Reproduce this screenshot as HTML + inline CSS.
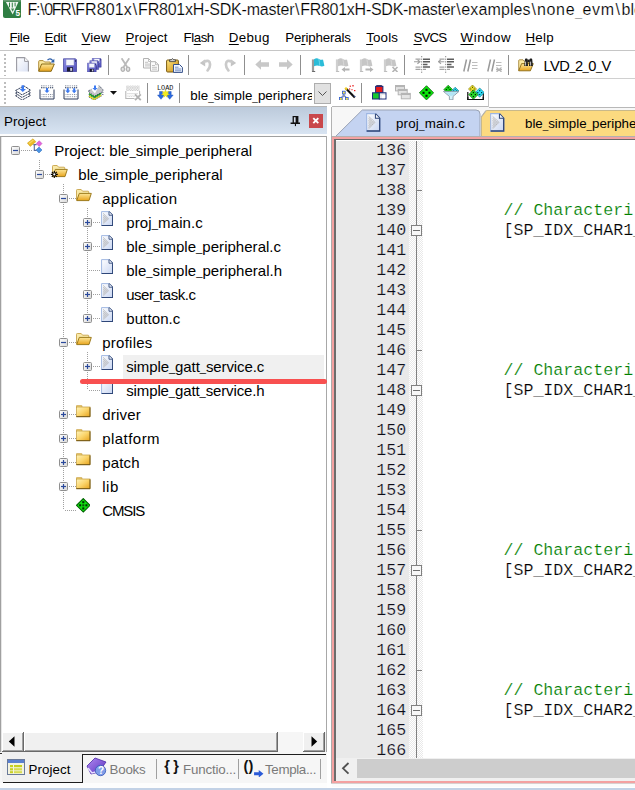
<!DOCTYPE html>
<html><head><meta charset="utf-8"><title>uVision</title><style>
html,body{margin:0;padding:0;background:#fff}
#r{position:relative;width:635px;height:790px;overflow:hidden;background:#fff;font-family:"Liberation Sans",sans-serif}
#r div,#r span.t,#r svg{position:absolute}
#r span.t{white-space:pre}
#r u{text-decoration:underline;text-underline-offset:1.5px;text-decoration-thickness:1px}
</style></head><body><div id="r">
<svg width="0" height="0" style="left:0;top:0"><defs><linearGradient id="gPage" x1="0" y1="0" x2="1" y2="1"><stop offset="0" stop-color="#ffffff"/><stop offset="1" stop-color="#c9d6f2"/></linearGradient><linearGradient id="gFold" x1="0" y1="0" x2="0" y2="1"><stop offset="0" stop-color="#fde79a"/><stop offset="1" stop-color="#e8a41c"/></linearGradient><linearGradient id="gFold2" x1="0" y1="0" x2="0" y2="1"><stop offset="0" stop-color="#fde88f"/><stop offset="1" stop-color="#d99a18"/></linearGradient><linearGradient id="gFlop" x1="0" y1="0" x2="1" y2="1"><stop offset="0" stop-color="#8c8ce6"/><stop offset="1" stop-color="#5050ba"/></linearGradient><linearGradient id="gExp" x1="0" y1="0" x2="1" y2="1"><stop offset="0" stop-color="#ffffff"/><stop offset="1" stop-color="#d8d8d8"/></linearGradient><linearGradient id="gClip" x1="0" y1="0" x2="1" y2="1"><stop offset="0" stop-color="#ffe680"/><stop offset="1" stop-color="#c98a10"/></linearGradient><linearGradient id="gBook" x1="0" y1="0" x2="1" y2="1"><stop offset="0" stop-color="#b08af0"/><stop offset="1" stop-color="#5a30c0"/></linearGradient><linearGradient id="gFoldC" x1="0" y1="0" x2="1" y2="1"><stop offset="0" stop-color="#fff4bc"/><stop offset=".5" stop-color="#fbd56c"/><stop offset="1" stop-color="#e6a21c"/></linearGradient><pattern id="pDots" width="2" height="2" patternUnits="userSpaceOnUse"><rect width="1" height="1" fill="#adadad"/><rect x="1" y="1" width="1" height="1" fill="#adadad"/></pattern><linearGradient id="gNew" x1="0" y1="0" x2="1" y2="1"><stop offset="0" stop-color="#ffffff"/><stop offset="1" stop-color="#dbe2f4"/></linearGradient><pattern id="pDotsG" width="2.4" height="2.4" patternUnits="userSpaceOnUse"><rect width="1.2" height="1.2" fill="#bcbcbc"/><rect x="1.2" y="1.2" width="1.2" height="1.2" fill="#c8c8c8"/></pattern><pattern id="pDotsN" width="2.2" height="2.2" patternUnits="userSpaceOnUse"><rect width="1.1" height="1.1" fill="#34425f"/></pattern></defs></svg>
<svg style="left:2.8px;top:0px" width="18.4" height="18" viewBox="0 0 18.4 18"><rect x="0" y="-1" width="18.2" height="19" rx="2" fill="#2f7e43"/><rect x="0.4" y="0" width="17.4" height="1.6" fill="#7fa888" opacity=".7"/><path d="M2.9 1.9 H15.4 L9.7 14.6 Z" fill="#fff" opacity=".93"/><path d="M6.5 2.6 V7.3 M9.3 2.6 V7.6 M12.1 2.6 V6.4" stroke="#2f7e43" stroke-width="1"/><path d="M8 8.4 L11.2 8.4 L9.7 11.8 Z" fill="#2f7e43" opacity=".9"/><text x="12.6" y="16.3" font-family="Liberation Sans,sans-serif" font-weight="bold" font-size="8.2" fill="#fff">5</text></svg>
<span class="t" style="left:27.50px;top:-0.14px;font-size:16px;line-height:20px;color:#000;font-family:'Liberation Sans',sans-serif;letter-spacing:-1.224px;-webkit-text-stroke:0.18px #fff;">F:<span style="margin:0 0.85px">\</span></span>
<span class="t" style="left:44.20px;top:-0.14px;font-size:16px;line-height:20px;color:#000;font-family:'Liberation Sans',sans-serif;letter-spacing:-1.343px;-webkit-text-stroke:0.18px #fff;">0FR<span style="margin:0 0.85px">\</span></span>
<span class="t" style="left:75.20px;top:-0.14px;font-size:16px;line-height:20px;color:#000;font-family:'Liberation Sans',sans-serif;letter-spacing:0.104px;-webkit-text-stroke:0.18px #fff;">FR801x<span style="margin:0 0.85px">\</span></span>
<span class="t" style="left:138.10px;top:-0.14px;font-size:16px;line-height:20px;color:#000;font-family:'Liberation Sans',sans-serif;letter-spacing:-0.215px;-webkit-text-stroke:0.18px #fff;">FR801xH-SDK-master<span style="margin:0 0.85px">\</span></span>
<span class="t" style="left:300.20px;top:-0.14px;font-size:16px;line-height:20px;color:#000;font-family:'Liberation Sans',sans-serif;letter-spacing:-0.268px;-webkit-text-stroke:0.18px #fff;">FR801xH-SDK-master<span style="margin:0 0.85px">\</span></span>
<span class="t" style="left:461.30px;top:-0.14px;font-size:16px;line-height:20px;color:#000;font-family:'Liberation Sans',sans-serif;letter-spacing:0.120px;-webkit-text-stroke:0.18px #fff;">examples<span style="margin:0 0.85px">\</span></span>
<span class="t" style="left:537.00px;top:-0.14px;font-size:16px;line-height:20px;color:#000;font-family:'Liberation Sans',sans-serif;letter-spacing:0.654px;-webkit-text-stroke:0.18px #fff;">none<span style="font-size:11.94px;position:relative;top:0.8px">_</span>evm<span style="margin:0 0.85px">\</span></span>
<span class="t" style="left:621.50px;top:-0.14px;font-size:16px;line-height:20px;color:#000;font-family:'Liberation Sans',sans-serif;-webkit-text-stroke:0.18px #fff;">ble<span style="font-size:11.94px;position:relative;top:0.8px">_</span>simple</span>
<span class="t" style="left:9.50px;top:28.68px;font-size:13.33px;line-height:17px;color:#000;font-family:'Liberation Sans',sans-serif;letter-spacing:-0.371px;"><u>F</u>ile</span>
<span class="t" style="left:44.50px;top:28.68px;font-size:13.33px;line-height:17px;color:#000;font-family:'Liberation Sans',sans-serif;letter-spacing:-0.242px;"><u>E</u>dit</span>
<span class="t" style="left:81.50px;top:28.68px;font-size:13.33px;line-height:17px;color:#000;font-family:'Liberation Sans',sans-serif;letter-spacing:0.086px;"><u>V</u>iew</span>
<span class="t" style="left:125.50px;top:28.68px;font-size:13.33px;line-height:17px;color:#000;font-family:'Liberation Sans',sans-serif;letter-spacing:0.074px;"><u>P</u>roject</span>
<span class="t" style="left:183.50px;top:28.68px;font-size:13.33px;line-height:17px;color:#000;font-family:'Liberation Sans',sans-serif;letter-spacing:-0.459px;">Fl<u>a</u>sh</span>
<span class="t" style="left:228.80px;top:28.68px;font-size:13.33px;line-height:17px;color:#000;font-family:'Liberation Sans',sans-serif;letter-spacing:0.344px;"><u>D</u>ebug</span>
<span class="t" style="left:285.20px;top:28.68px;font-size:13.33px;line-height:17px;color:#000;font-family:'Liberation Sans',sans-serif;letter-spacing:-0.166px;">Pe<u>r</u>ipherals</span>
<span class="t" style="left:366.20px;top:28.68px;font-size:13.33px;line-height:17px;color:#000;font-family:'Liberation Sans',sans-serif;letter-spacing:0.175px;"><u>T</u>ools</span>
<span class="t" style="left:413.50px;top:28.68px;font-size:13.33px;line-height:17px;color:#000;font-family:'Liberation Sans',sans-serif;letter-spacing:-0.899px;"><u>S</u>VCS</span>
<span class="t" style="left:460.50px;top:28.68px;font-size:13.33px;line-height:17px;color:#000;font-family:'Liberation Sans',sans-serif;letter-spacing:0.549px;"><u>W</u>indow</span>
<span class="t" style="left:525.50px;top:28.68px;font-size:13.33px;line-height:17px;color:#000;font-family:'Liberation Sans',sans-serif;letter-spacing:0.220px;"><u>H</u>elp</span>
<div style="left:0px;top:50px;width:635px;height:1px;background:#c6c6c6;"></div>
<div style="left:0px;top:78px;width:635px;height:1px;background:#d0d0d0;"></div>
<div style="left:0px;top:105.8px;width:488.5px;height:1.3px;background:#b6b6b6;"></div>
<div style="left:488.5px;top:107px;width:147px;height:1.3px;background:#b8b8b8;"></div>
<div style="left:4.2px;top:54px;width:1.6px;height:22.5px;background:repeating-linear-gradient(to bottom,#bdbdbd 0,#bdbdbd 1.6px,transparent 1.6px,transparent 4.1px);"></div>
<div style="left:4.2px;top:82.3px;width:1.6px;height:22.5px;background:repeating-linear-gradient(to bottom,#bdbdbd 0,#bdbdbd 1.6px,transparent 1.6px,transparent 4.1px);"></div>
<div style="left:108px;top:55px;width:1px;height:20px;background:#8f8f8f;"></div>
<div style="left:188px;top:55px;width:1px;height:20px;background:#8f8f8f;"></div>
<div style="left:244px;top:55px;width:1px;height:20px;background:#8f8f8f;"></div>
<div style="left:300px;top:55px;width:1px;height:20px;background:#8f8f8f;"></div>
<div style="left:404px;top:55px;width:1px;height:20px;background:#8f8f8f;"></div>
<div style="left:508px;top:55px;width:1px;height:20px;background:#8f8f8f;"></div>
<div style="left:147px;top:83px;width:1px;height:20px;background:#8f8f8f;"></div>
<div style="left:179px;top:83px;width:1px;height:20px;background:#8f8f8f;"></div>
<div style="left:361px;top:83px;width:1px;height:20px;background:#8f8f8f;"></div>
<div style="left:488px;top:79px;width:1px;height:28px;background:#c6c6c6;"></div>
<svg style="left:16px;top:57px" width="13" height="15" viewBox="0 0 13 15"><path d="M0.6 14.6 V0.6 H8.6 L12.4 4.4 V14.6" fill="url(#gNew)" stroke="#9a9aa2" stroke-width="1.1"/><path d="M8.6 0.6 V4.4 H12.4" fill="#fff" stroke="#9a9aa2" stroke-width="1"/></svg>
<svg style="left:38px;top:57px" width="17" height="15" viewBox="0 0 17 15"><path d="M0.7 14 V4.5 Q0.7 3.6 1.6 3.6 H5.2 L6.6 5 H12.2 V7" fill="#fbe9a0" stroke="#b08d3a" stroke-width="1"/><path d="M0.7 14.3 L3.6 7 H16.3 L13.2 14.3 Z" fill="url(#gFold)" stroke="#8a6a14" stroke-width="1"/><path d="M9.5 3.2 Q12 0.2 14.8 3.6" fill="none" stroke="#2c5ea8" stroke-width="1.3"/><path d="M16.3 1.8 V5.6 H12.5 Z" fill="#2c5ea8"/></svg>
<svg style="left:63px;top:57.5px" width="14" height="14.5" viewBox="0 0 14 14"><g transform="translate(0,0) scale(1.0)"><path d="M0.5 0.5 H12.5 L13.5 1.5 V13.5 H0.5 Z" fill="url(#gFlop)" stroke="#3c3c98" stroke-width=".7"/><rect x="3" y="1.2" width="8" height="5.8" fill="#f4f6fc" stroke="#8c8cc8" stroke-width=".5"/><rect x="4" y="9" width="6" height="4.3" fill="#1a1a30"/><rect x="7.2" y="9.8" width="2" height="2.8" fill="#d0d0e0"/><rect x="12" y="2" width="1" height="1.4" fill="#1a1a50"/></g></svg>
<svg style="left:87px;top:57.5px" width="15" height="14.5" viewBox="0 0 15 14.5"><g transform="translate(5,0) scale(0.68)"><path d="M0.5 0.5 H12.5 L13.5 1.5 V13.5 H0.5 Z" fill="url(#gFlop)" stroke="#3c3c98" stroke-width=".7"/><rect x="3" y="1.2" width="8" height="5.8" fill="#f4f6fc" stroke="#8c8cc8" stroke-width=".5"/><rect x="4" y="9" width="6" height="4.3" fill="#1a1a30"/><rect x="7.2" y="9.8" width="2" height="2.8" fill="#d0d0e0"/><rect x="12" y="2" width="1" height="1.4" fill="#1a1a50"/></g><g transform="translate(2.5,2.3) scale(0.68)"><path d="M0.5 0.5 H12.5 L13.5 1.5 V13.5 H0.5 Z" fill="url(#gFlop)" stroke="#3c3c98" stroke-width=".7"/><rect x="3" y="1.2" width="8" height="5.8" fill="#f4f6fc" stroke="#8c8cc8" stroke-width=".5"/><rect x="4" y="9" width="6" height="4.3" fill="#1a1a30"/><rect x="7.2" y="9.8" width="2" height="2.8" fill="#d0d0e0"/><rect x="12" y="2" width="1" height="1.4" fill="#1a1a50"/></g><g transform="translate(0,4.8) scale(0.68)"><path d="M0.5 0.5 H12.5 L13.5 1.5 V13.5 H0.5 Z" fill="url(#gFlop)" stroke="#3c3c98" stroke-width=".7"/><rect x="3" y="1.2" width="8" height="5.8" fill="#f4f6fc" stroke="#8c8cc8" stroke-width=".5"/><rect x="4" y="9" width="6" height="4.3" fill="#1a1a30"/><rect x="7.2" y="9.8" width="2" height="2.8" fill="#d0d0e0"/><rect x="12" y="2" width="1" height="1.4" fill="#1a1a50"/></g></svg>
<svg style="left:120px;top:58px" width="11" height="14" viewBox="0 0 11 14"><path d="M1.6 0.3 L7.2 9 M9.2 0.3 L3.6 9" stroke="#bababa" stroke-width="1.8" fill="none"/><ellipse cx="2.8" cy="11.2" rx="1.7" ry="2.1" fill="#e4e4e4" stroke="#b4b4b4" stroke-width="1.3"/><ellipse cx="8" cy="11.2" rx="1.7" ry="2.1" fill="#e4e4e4" stroke="#b4b4b4" stroke-width="1.3"/></svg>
<svg style="left:142.5px;top:58px" width="16" height="14" viewBox="0 0 16 14"><path d="M0.5 0.5 H5.5 L8.5 3.5 V10 H0.5 Z" fill="#fbfbfb" stroke="#b2b2b2" stroke-width="1"/><path d="M5.5 0.5 V3.5 H8.5" fill="none" stroke="#b2b2b2" stroke-width=".8"/><path d="M2 4.3 H5 M2 6.1 H7 M2 7.9 H7" stroke="#b4b4b4" stroke-width=".8"/><g transform="translate(7,3.2)"><path d="M0.5 0.5 H5.5 L8.5 3.5 V10 H0.5 Z" fill="#fbfbfb" stroke="#b2b2b2" stroke-width="1"/><path d="M5.5 0.5 V3.5 H8.5" fill="none" stroke="#b2b2b2" stroke-width=".8"/><path d="M2 4.3 H5 M2 6.1 H7 M2 7.9 H7" stroke="#b4b4b4" stroke-width=".8"/></g></svg>
<svg style="left:166px;top:57.5px" width="17" height="15" viewBox="0 0 17 15"><rect x="0.6" y="2" width="11.8" height="12" rx="1" fill="url(#gClip)" stroke="#7a5a10" stroke-width="1"/><path d="M3.5 3.6 V1.8 H5.2 Q6.5 -0.6 7.8 1.8 H9.5 V3.6 Z" fill="#cfcfcf" stroke="#3a3a3a" stroke-width=".8"/><path d="M7.5 6.5 H13.5 L16.4 9.4 V14.4 H7.5 Z" fill="#f2f6fe" stroke="#34508a" stroke-width="1"/><path d="M9 9.2 H12.5 M9 11 H15 M9 12.8 H15" stroke="#6a86c0" stroke-width=".9"/></svg>
<svg style="left:199px;top:58px" width="13" height="13.5" viewBox="0 0 13 13.5"><path d="M0.8 5 L6.2 1.2 V8.4 Z" fill="#c4c4c4"/><path d="M5.5 3.6 Q10.6 1.2 11 6 Q11.3 10 8.6 12.4" fill="none" stroke="#cacaca" stroke-width="2.7" stroke-linecap="round"/></svg>
<svg style="left:224px;top:58px" width="13" height="13.5" viewBox="0 0 13 13.5"><g transform="translate(13,0) scale(-1,1)"><path d="M0.8 5 L6.2 1.2 V8.4 Z" fill="#c4c4c4"/><path d="M5.5 3.6 Q10.6 1.2 11 6 Q11.3 10 8.6 12.4" fill="none" stroke="#cacaca" stroke-width="2.7" stroke-linecap="round"/></g></svg>
<svg style="left:255px;top:59.3px" width="14" height="11" viewBox="0 0 14 11"><path d="M0.3 5.5 L6 0.3 V3.3 H14 V7.7 H6 V10.7 Z" fill="#c8c8c8"/></svg>
<svg style="left:279px;top:59.3px" width="14" height="11" viewBox="0 0 14 11"><g transform="translate(14,0) scale(-1,1)"><path d="M0.3 5.5 L6 0.3 V3.3 H14 V7.7 H6 V10.7 Z" fill="#c8c8c8"/></g></svg>
<svg style="left:310.5px;top:57.5px" width="14" height="14.5" viewBox="0 0 14 14.5"><rect x="0.9" y="1.4" width="2.2" height="13" fill="#9c9c9c"/><rect x="1.2" y="13" width="3" height="1.4" fill="#6a6a6a"/><path d="M3 1.2 Q5.5 -0.6 8 0.9 Q10 2.2 12 1.5 L13.4 7.8 Q11 9 9 8.1 Q6 6.6 3 8.3 Z" fill="#2bbcd8"/><path d="M7.8 1 Q8.6 4 8.8 8" stroke="#7adcf0" stroke-width=".8" fill="none"/></svg>
<svg style="left:335px;top:57.5px" width="15" height="14.5" viewBox="0 0 15 14.5"><rect x="0.9" y="1.4" width="2.2" height="13" fill="#cfcfcf"/><rect x="1.2" y="13" width="3" height="1.4" fill="#bdbdbd"/><path d="M3 1.2 Q5.5 -0.6 8 0.9 Q10 2.2 12 1.5 L13.4 7.8 Q11 9 9 8.1 Q6 6.6 3 8.3 Z" fill="#c6c6c6"/><path d="M7.8 1 Q8.6 4 8.8 8" stroke="#dcdcdc" stroke-width=".8" fill="none"/><path d="M14.5 10.6 H10 V9 L6.5 11.6 L10 14.2 V12.6 H14.5 Z" fill="#b4b4b4"/></svg>
<svg style="left:359px;top:57.5px" width="15" height="14.5" viewBox="0 0 15 14.5"><rect x="0.9" y="1.4" width="2.2" height="13" fill="#cfcfcf"/><rect x="1.2" y="13" width="3" height="1.4" fill="#bdbdbd"/><path d="M3 1.2 Q5.5 -0.6 8 0.9 Q10 2.2 12 1.5 L13.4 7.8 Q11 9 9 8.1 Q6 6.6 3 8.3 Z" fill="#c6c6c6"/><path d="M7.8 1 Q8.6 4 8.8 8" stroke="#dcdcdc" stroke-width=".8" fill="none"/><path d="M6.5 10.6 H11 V9 L14.5 11.6 L11 14.2 V12.6 H6.5 Z" fill="#b4b4b4"/></svg>
<svg style="left:383px;top:57.5px" width="16" height="14.5" viewBox="0 0 16 14.5"><rect x="0.9" y="1.4" width="2.2" height="13" fill="#cfcfcf"/><rect x="1.2" y="13" width="3" height="1.4" fill="#bdbdbd"/><path d="M3 1.2 Q5.5 -0.6 8 0.9 Q10 2.2 12 1.5 L13.4 7.8 Q11 9 9 8.1 Q6 6.6 3 8.3 Z" fill="#c6c6c6"/><path d="M7.8 1 Q8.6 4 8.8 8" stroke="#dcdcdc" stroke-width=".8" fill="none"/><path d="M9.5 9 L14.5 14 M14.5 9 L9.5 14" stroke="#b4b4b4" stroke-width="1.6" fill="none"/></svg>
<svg style="left:414px;top:56.4px" width="16.2" height="17" viewBox="0 -2 16.2 17"><path d="M9 1.2 H16 M9 3.7 H16 M9 6.4 H13.5 M9 9.1 H16" stroke="#5e5e5e" stroke-width="1.5"/><path d="M1.5 1.2 H6.5 M1.5 9.1 H6.5 M1.5 11.4 H6.5 M9 11.4 H12" stroke="#a4a4a4" stroke-width="1.2"/><path d="M7.7 -2 V15" stroke="#8a8a8a" stroke-width="1" stroke-dasharray="1.3 1.3"/><path d="M0 3.7 H5.6 M3.4 1.6 L6 3.7 L3.4 5.8" stroke="#a0a0a0" stroke-width="1.1" fill="none"/></svg>
<svg style="left:438px;top:56.4px" width="16.2" height="17" viewBox="0 -2 16.2 17"><path d="M9 1.2 H16 M9 3.7 H16 M9 6.4 H13.5 M9 9.1 H16" stroke="#5e5e5e" stroke-width="1.5"/><path d="M1.5 1.2 H6.5 M1.5 9.1 H6.5 M1.5 11.4 H6.5 M9 11.4 H12" stroke="#a4a4a4" stroke-width="1.2"/><path d="M7.7 -2 V15" stroke="#8a8a8a" stroke-width="1" stroke-dasharray="1.3 1.3"/><path d="M6.4 3.7 H0.8 M3 1.6 L0.4 3.7 L3 5.8" stroke="#a0a0a0" stroke-width="1.1" fill="none"/></svg>
<svg style="left:463px;top:58.5px" width="15" height="13" viewBox="0 0 15 13"><path d="M3.5 0.5 L0.8 12.5 M7.5 0.5 L4.8 12.5" stroke="#9a9a9a" stroke-width="1.5"/><path d="M9 3.5 H14.5 M9 6.5 H14.5 M9 9.5 H14.5" stroke="#bdbdbd" stroke-width="1.1"/></svg>
<svg style="left:487px;top:58.5px" width="15.5" height="13.5" viewBox="0 0 15.5 13.5"><path d="M3.5 0.5 L0.8 12.5 M7.5 0.5 L4.8 12.5" stroke="#9a9a9a" stroke-width="1.5"/><path d="M9 3.5 H14.5 M9 6.5 H14.5" stroke="#bdbdbd" stroke-width="1.1"/><path d="M9.5 8.5 L14.5 13 M14.5 8.5 L9.5 13 M9 10.7 H15" stroke="#b4b4b4" stroke-width="1.2"/></svg>
<svg style="left:518px;top:57.5px" width="16" height="14" viewBox="0 0 16 14"><path d="M0.7 12.6 V2.6 Q0.7 1.8 1.5 1.8 H5 L6.2 3.2 H11 V6" fill="#fbe9a0" stroke="#a88a40" stroke-width=".9"/><path d="M0.7 12.8 L3.6 5.6 H15.3 L12.4 12.8 Z" fill="url(#gFold)" stroke="#8a6a14" stroke-width=".9"/><path d="M7 1.2 Q7 0.4 7.8 0.4 H8.8 Q9.5 0.4 9.6 1.2 L10 8 H6.2 Z M11.6 1.2 Q11.6 0.4 12.4 0.4 H13.4 Q14.1 0.4 14.2 1.2 L14.9 8 H11 Z" fill="#1c1c1c"/><rect x="9.4" y="1.6" width="2.4" height="2.6" fill="#1c1c1c"/><path d="M7.6 3.6 V7.6 M12.6 3.6 V7.6" stroke="#c8c8c8" stroke-width="1"/></svg>
<svg style="left:14.5px;top:84.5px" width="16" height="15.5" viewBox="0 0 16 15.5"><path d="M0.6 10.7 L9 6.1 L15.6 10.399999999999999 L7 15.1 Z" fill="#fff" stroke="#26324e" stroke-width=".9" stroke-dasharray="2.4 .6"/><path d="M0.6 8.1 L9 3.5 L15.6 7.8 L7 12.5 Z" fill="#fff" stroke="#26324e" stroke-width=".9" stroke-dasharray="2.4 .6"/><path d="M0.6 5.5 L9 0.9000000000000004 L15.6 5.2 L7 9.9 Z" fill="#fff" stroke="#26324e" stroke-width=".9" stroke-dasharray="2.4 .6"/><path d="M6.6 0.3 h2.4 v3.6 h2 l-3.2 3.1 l-3.2 -3.1 h2 z" fill="#3c7af0"/></svg>
<svg style="left:38.5px;top:84.5px" width="16" height="15" viewBox="0 0 16 15"><path d="M1 4.5 V14 H15 V4.5" fill="none" stroke="#2a3858" stroke-width="1"/><rect x="2.6" y="9.2" width="11" height="1.1" fill="url(#pDotsN)"/><rect x="2.6" y="11.4" width="11" height="1.1" fill="url(#pDotsN)"/><rect x="2" y="0.5" width="12.5" height="3.3" fill="url(#pDotsN)"/><path d="M7 3 h2 v2.4 h1.6 l-2.6 2.6 l-2.6 -2.6 h1.6 z" fill="#3c7af0"/></svg>
<svg style="left:62.8px;top:84.5px" width="16" height="15" viewBox="0 0 16 15"><path d="M1 4.5 V14 H15 V4.5" fill="none" stroke="#2a3858" stroke-width="1"/><rect x="2.6" y="9.2" width="11" height="1.1" fill="url(#pDotsN)"/><rect x="2.6" y="11.4" width="11" height="1.1" fill="url(#pDotsN)"/><rect x="2" y="0.5" width="12.5" height="3.3" fill="url(#pDotsN)"/><path d="M3.8 3.2 h2 v2.4 h1.6 l-2.6 2.6 l-2.6 -2.6 h1.6 z" fill="#3c7af0"/><path d="M10.2 3.2 h2 v2.4 h1.6 l-2.6 2.6 l-2.6 -2.6 h1.6 z" fill="#3c7af0"/></svg>
<svg style="left:87.5px;top:84.5px" width="16.5" height="15.8" viewBox="0 0 16.5 15.8"><path d="M1 10.9 L6 14.3 L13.2 10.1" fill="none" stroke="#eef010" stroke-width="1.5"/><path d="M1 8.7 L6.4 12.2 L13.2 8" fill="none" stroke="#12a612" stroke-width="1.5"/><path d="M0.8 11.9 L5.9 15.3 L13.6 10.9 M0.8 9.8 L6.2 13.3 L13.4 9.1 M14.2 7.2 L15.4 7.4 M14.2 9.4 L15.4 9.6" fill="none" stroke="#26324e" stroke-width=".8" stroke-dasharray="1.3 1"/><path d="M0.7 5.7 L3.4 4.4 L7 8.4 L11 0.6 L15.3 5 L13.6 7.4 L6.6 11 L1 7.4 Z" fill="#c6c7ca"/><path d="M0.7 5.7 L3.4 4.4 M11 0.6 L15.3 5 L13.6 7.4 L6.6 11 L1 7.4 L0.7 5.7" fill="none" stroke="#26324e" stroke-width=".8" stroke-dasharray="1.3 .9"/><path d="M6 0.5 h2 v2.4 h1.6 l-2.6 2.6 l-2.6 -2.6 h1.6 z" fill="#3c7af0"/></svg>
<svg style="left:109.5px;top:91.4px" width="7" height="4" viewBox="0 0 7 4"><path d="M0 0 H7 L3.5 3.8 Z" fill="#111"/></svg>
<svg style="left:125px;top:84.5px" width="16.5" height="16" viewBox="0 0 16.5 16"><rect x="1" y="0.6" width="13.6" height="5.4" fill="url(#pDotsG)"/><path d="M0.8 5.9 V13.5 H9.5" fill="none" stroke="#b8b8b8" stroke-width="1.1"/><path d="M14.6 5.9 V9" stroke="#b8b8b8" stroke-width="1.1"/><rect x="2" y="8" width="11" height="1.2" fill="url(#pDotsG)"/><rect x="2" y="10.6" width="8" height="1.2" fill="url(#pDotsG)"/><path d="M10 9.4 L15.8 15.2 M15.8 9.4 L10 15.2" stroke="#b2b2b2" stroke-width="1.9"/></svg>
<svg style="left:157px;top:85px" width="17" height="15" viewBox="0 0 17 15"><text x="0" y="5" font-family="Liberation Mono,monospace" font-size="7" textLength="16.4" lengthAdjust="spacingAndGlyphs" fill="#111">LOAD</text><path d="M2.5 6.5 h3 v3.5 h2 l-3.5 4.3 l-3.5 -4.3 h2 z M11.2 6.5 h3 v3.5 h2 l-3.5 4.3 l-3.5 -4.3 h2 z" fill="#2a6ae0" stroke="#1a4ab0" stroke-width=".4"/><path d="M8.5 4.8 L9.5 7 L11.8 6.2 L10.6 8.3 L12.6 9.6 L10.2 10 L10.2 12.4 L8.5 10.7 L6.8 12.4 L6.8 10 L4.4 9.6 L6.4 8.3 L5.2 6.2 L7.5 7 Z" fill="#f4ec20" stroke="#c8b800" stroke-width=".3"/></svg>
<svg style="left:338.5px;top:84.5px" width="17" height="15.5" viewBox="0 0 17 15.5"><path d="M4.8 8.5 V11.5 M1.8 12.6 L4.8 10.4 L7.8 12.6" stroke="#3a6ae0" stroke-width=".9" fill="none"/><path d="M4.8 9.2 L6.6 11 L4.8 12.6 L3 11 Z" fill="#8a93a8"/><g fill="#f8e448" stroke="#2a5ad8" stroke-width=".8"><rect x="3.4" y="6.2" width="2.8" height="2.8"/><rect x="0.4" y="12.4" width="2.8" height="2.8"/><rect x="6.4" y="12.4" width="2.8" height="2.8"/></g><path d="M7 3.6 L15.8 12.6" stroke="#111" stroke-width="2.1"/><path d="M15 10.6 L16.4 12" stroke="#4a6ac8" stroke-width="1"/><path d="M6.2 2.8 L8 4.6" stroke="#f0cc28" stroke-width="2.3"/><g fill="#e82020"><rect x="10.6" y="0.6" width="1.4" height="1.2"/><rect x="13.2" y="0.2" width="1.6" height="1.2"/><rect x="10" y="3.4" width="1.2" height="1.2"/><rect x="15" y="5" width="1.4" height="1.2"/><rect x="12.4" y="4.2" width="1.2" height="1"/></g></svg>
<svg style="left:372px;top:85px" width="14.5" height="14.5" viewBox="0 0 14.5 14.5"><path d="M4 1.2 L5 0.4 H9.5 L10.5 1.2" fill="#5a1a1a" stroke="#1a1a5a" stroke-width=".8"/><rect x="3.6" y="1.4" width="7.3" height="6.2" fill="#e81818" stroke="#1a2a7a" stroke-width="1"/><rect x="0.5" y="7.8" width="6.8" height="6.2" fill="#18c830" stroke="#1a2a7a" stroke-width="1"/><rect x="7.3" y="7.8" width="6.7" height="6.2" fill="#e8e8ec" stroke="#1a2a7a" stroke-width="1"/><rect x="9.8" y="10" width="3.4" height="3.2" fill="#fff"/></svg>
<svg style="left:394.5px;top:85px" width="16" height="14.5" viewBox="0 0 16 14.5"><rect x="0.5" y="0.5" width="9" height="5.4" fill="#e4e4e4" stroke="#b4b4b4" stroke-width="1"/><rect x="0.5" y="0.5" width="9" height="1.6" fill="#b4b4b4"/><rect x="3.2" y="4.4" width="9" height="5.4" fill="#e4e4e4" stroke="#b4b4b4" stroke-width="1"/><rect x="3.2" y="4.4" width="9" height="1.6" fill="#b4b4b4"/><rect x="6.3" y="8.4" width="9" height="5.4" fill="#e4e4e4" stroke="#b4b4b4" stroke-width="1"/><rect x="6.3" y="8.4" width="9" height="1.6" fill="#b4b4b4"/></svg>
<svg style="left:419px;top:84.5px" width="15" height="15.5" viewBox="0 0 15 15.5"><path d="M7.5 0.7000000000000002 L14.6 7.8 L7.5 14.899999999999999 L0.40000000000000036 7.8 Z" fill="#0be80b" stroke="#0a5a0a" stroke-width="0.8"/><rect x="6.45" y="3.77" width="2.10" height="2.10" fill="#001800"/><rect x="3.47" y="6.75" width="2.10" height="2.10" fill="#001800"/><rect x="9.43" y="6.75" width="2.10" height="2.10" fill="#001800"/><rect x="6.45" y="9.73" width="2.10" height="2.10" fill="#001800"/></svg>
<svg style="left:443px;top:84.5px" width="16.5" height="15.5" viewBox="0 0 16.5 15.5"><path d="M5.2 0.1999999999999993 L9.600000000000001 4.6 L5.2 9.0 L0.7999999999999998 4.6 Z" fill="#14e014" stroke="#0a5a0a" stroke-width="0.6"/><rect x="4.60" y="2.15" width="1.20" height="1.20" fill="#002000"/><rect x="2.75" y="4.00" width="1.20" height="1.20" fill="#002000"/><rect x="6.45" y="4.00" width="1.20" height="1.20" fill="#002000"/><rect x="4.60" y="5.85" width="1.20" height="1.20" fill="#002000"/><path d="M12.2 2.1999999999999997 L15.799999999999999 5.8 L12.2 9.4 L8.6 5.8 Z" fill="#30e0f8" stroke="#0a6a80" stroke-width="0.6"/><rect x="11.70" y="3.79" width="1.00" height="1.00" fill="#003848"/><rect x="10.19" y="5.30" width="1.00" height="1.00" fill="#003848"/><rect x="13.21" y="5.30" width="1.00" height="1.00" fill="#003848"/><rect x="11.70" y="6.81" width="1.00" height="1.00" fill="#003848"/><path d="M0.4 6.4 H16 L10 11.4 V14.8 H6.4 V11.4 Z" fill="#d4f2fb" stroke="#8a9aa8" stroke-width=".9"/><path d="M2.4 7.2 H14 L9.6 10.8 H6.8 Z" fill="#a8e0f4" opacity=".8"/></svg>
<svg style="left:466.5px;top:84.5px" width="17" height="15.5" viewBox="0 0 17 15.5"><path d="M0.8 7 V14.7 H16.3 V7" fill="#fff" stroke="#111" stroke-width="1.2"/><path d="M5.5 0 L9.5 4 L5.5 8 L1.5 4 Z" fill="#f4ec30" stroke="#6a6000" stroke-width="0.6"/><rect x="4.95" y="1.77" width="1.10" height="1.10" fill="#403800"/><rect x="3.27" y="3.45" width="1.10" height="1.10" fill="#403800"/><rect x="6.63" y="3.45" width="1.10" height="1.10" fill="#403800"/><rect x="4.95" y="5.13" width="1.10" height="1.10" fill="#403800"/><path d="M12.7 3.0 L17.299999999999997 7.6 L12.7 12.2 L8.1 7.6 Z" fill="#30e0f8" stroke="#0a6a80" stroke-width="0.6"/><rect x="12.10" y="5.07" width="1.20" height="1.20" fill="#003848"/><rect x="10.17" y="7.00" width="1.20" height="1.20" fill="#003848"/><rect x="14.03" y="7.00" width="1.20" height="1.20" fill="#003848"/><rect x="12.10" y="8.93" width="1.20" height="1.20" fill="#003848"/><path d="M6.4 4.8999999999999995 L11.100000000000001 9.6 L6.4 14.3 L1.7000000000000002 9.6 Z" fill="#28e028" stroke="#0a5a0a" stroke-width="0.6"/><rect x="5.75" y="6.98" width="1.30" height="1.30" fill="#002000"/><rect x="3.78" y="8.95" width="1.30" height="1.30" fill="#002000"/><rect x="7.72" y="8.95" width="1.30" height="1.30" fill="#002000"/><rect x="5.75" y="10.92" width="1.30" height="1.30" fill="#002000"/><path d="M0.8 12 V14.7 H16.3 V12" fill="none" stroke="#111" stroke-width="1.2"/></svg>
<span class="t" style="left:543.50px;top:57.32px;font-size:14.67px;line-height:18px;color:#000;font-family:'Liberation Sans',sans-serif;letter-spacing:-0.55px;">LVD<span style="font-size:11.2px">_</span>2<span style="font-size:11.2px">_</span>0<span style="font-size:11.2px">_</span>V</span>
<div style="left:186px;top:82px;width:125.5px;height:23px;overflow:hidden"><span class="t" style="left:4.30px;top:4.98px;font-size:13.33px;line-height:17px;color:#000;font-family:'Liberation Sans',sans-serif;letter-spacing:0.02px;">ble<span style="font-size:9.95px;position:relative;top:0.8px">_</span>simple<span style="font-size:9.95px;position:relative;top:0.8px">_</span>peripheral</span></div>
<div style="left:314px;top:83px;width:17px;height:21px;background:#e1e1e1;border:1px solid #adadad;box-sizing:border-box;"></div>
<svg style="left:314px;top:83px" width="17" height="21" viewBox="0 0 17 21"><path d="M4.5 8.5 L8.5 12.5 L12.5 8.5" fill="none" stroke="#555" stroke-width="1"/></svg>
<div style="left:0px;top:107px;width:327px;height:26.6px;background:linear-gradient(to bottom,#bccadb,#d8e4f2);"></div>
<span class="t" style="left:4.00px;top:112.88px;font-size:13.33px;line-height:17px;color:#000;font-family:'Liberation Sans',sans-serif;letter-spacing:0.074px;">Project</span>
<svg style="left:290px;top:115px" width="11" height="12" viewBox="0 0 11 12"><path d="M2.6 1 H8.4 V7.6 H10 V8.9 H0.6 V7.6 H2.6 Z" fill="#111"/><rect x="3.9" y="2.2" width="1.7" height="5.2" fill="#d4deec"/><rect x="4.9" y="8.9" width="1.1" height="2.2" fill="#111"/></svg>
<div style="left:309px;top:114px;width:14px;height:14px;background:#c9484c;"></div>
<svg style="left:309px;top:114px" width="14" height="14" viewBox="0 0 14 14"><path d="M4.3 4.2 L9.3 9.2 M9.3 4.2 L4.3 9.2" stroke="#fff" stroke-width="1.9" fill="none"/></svg>
<div style="left:0px;top:133.6px;width:327px;height:2.4px;background:#fdfdfd;"></div>
<div style="left:0px;top:136px;width:327px;height:1.1px;background:#a0a0a0;"></div>
<div style="left:0px;top:136px;width:1px;height:617px;background:#a0a0a0;"></div>
<div style="left:1px;top:137px;width:1px;height:615px;background:#e6e6e6;"></div>
<div style="left:326px;top:136px;width:1px;height:617px;background:#a8a8a8;"></div>
<div style="left:327px;top:106px;width:5px;height:684px;background:#ffffff;"></div>
<div style="left:123px;top:354.5px;width:201px;height:24.5px;background:#f0f0f0;"></div>
<div style="left:39px;top:160px;width:1px;height:10px;background:repeating-linear-gradient(to bottom,#a0a0a0 0,#a0a0a0 1px,transparent 1px,transparent 2px);"></div>
<div style="left:63px;top:184px;width:1px;height:326px;background:repeating-linear-gradient(to bottom,#a0a0a0 0,#a0a0a0 1px,transparent 1px,transparent 2px);"></div>
<div style="left:87px;top:208px;width:1px;height:110px;background:repeating-linear-gradient(to bottom,#a0a0a0 0,#a0a0a0 1px,transparent 1px,transparent 2px);"></div>
<div style="left:87px;top:352px;width:1px;height:38px;background:repeating-linear-gradient(to bottom,#a0a0a0 0,#a0a0a0 1px,transparent 1px,transparent 2px);"></div>
<div style="left:21px;top:150px;width:12px;height:1px;background:repeating-linear-gradient(to right,#a0a0a0 0,#a0a0a0 1px,transparent 1px,transparent 2px);"></div>
<svg style="left:11px;top:146px" width="9" height="9" viewBox="0 0 9 9"><rect x="0.5" y="0.5" width="8" height="8" rx="1" fill="url(#gExp)" stroke="#8f8f8f"/><path d="M2 4.5 H7" stroke="#2b4a9c" stroke-width="1.2"/></svg>
<svg style="left:27px;top:138px" width="16" height="16" viewBox="0 0 16 16"><path d="M6.3 6.6 H9.6 M7.3 6.6 V12.4 H9.6" stroke="#5a6a9a" stroke-width="1.1" fill="none"/><path d="M0.4 5.1 L6 0.8 L8.9 3.7 L3.2 8.4 Z" fill="#ecba24" stroke="#c89a10" stroke-width=".5"/><path d="M1.6 4.9 L6 1.6 L6.9 2.5 L2.5 5.9 Z" fill="#f8dc70" opacity=".8"/><path d="M9.3 5.6 L12.2 2.7 L15 5.6 L12.2 8.5 Z" fill="#e266dc" stroke="#c040b8" stroke-width=".5"/><path d="M9 12 L12 9 L15 12 L12 15 Z" fill="#4a94e4" stroke="#2a6ab8" stroke-width=".5"/></svg>
<span class="t" style="left:54.20px;top:140.60px;font-size:15px;line-height:19px;color:#000;font-family:'Liberation Sans',sans-serif;letter-spacing:0.015px;">Project: ble<span style="font-size:11.2px;position:relative;top:0.8px">_</span>simple<span style="font-size:11.2px;position:relative;top:0.8px">_</span>peripheral</span>
<div style="left:45px;top:174px;width:8px;height:1px;background:repeating-linear-gradient(to right,#a0a0a0 0,#a0a0a0 1px,transparent 1px,transparent 2px);"></div>
<svg style="left:35px;top:170px" width="9" height="9" viewBox="0 0 9 9"><rect x="0.5" y="0.5" width="8" height="8" rx="1" fill="url(#gExp)" stroke="#8f8f8f"/><path d="M2 4.5 H7" stroke="#2b4a9c" stroke-width="1.2"/></svg>
<svg style="left:50px;top:165px" width="18" height="14" viewBox="-2 0 18 14"><path d="M0.5 11 V1.3 Q0.5 0.5 1.3 0.5 H5.2 L6.6 2.2 H12 Q12.8 2.2 12.8 3 V4.6" fill="#f9e9a8" stroke="#c8a44a" stroke-width=".9"/><path d="M0.7 11.6 L3.3 4.4 H15.3 L13 11.6 Z" fill="url(#gFold)" stroke="#94700f" stroke-width=".9"/><g stroke="#000" stroke-width="1.1"><path d="M-1.2 9.4 H5.8 M2.3 5.9 V12.9 M-0.2 6.9 L4.8 11.9 M4.8 6.9 L-0.2 11.9"/></g><circle cx="2.3" cy="9.4" r="1.1" fill="#fff"/></svg>
<span class="t" style="left:78.20px;top:164.60px;font-size:15px;line-height:19px;color:#000;font-family:'Liberation Sans',sans-serif;letter-spacing:0.098px;">ble<span style="font-size:11.2px;position:relative;top:0.8px">_</span>simple<span style="font-size:11.2px;position:relative;top:0.8px">_</span>peripheral</span>
<div style="left:69px;top:198px;width:8px;height:1px;background:repeating-linear-gradient(to right,#a0a0a0 0,#a0a0a0 1px,transparent 1px,transparent 2px);"></div>
<svg style="left:59px;top:194px" width="9" height="9" viewBox="0 0 9 9"><rect x="0.5" y="0.5" width="8" height="8" rx="1" fill="url(#gExp)" stroke="#8f8f8f"/><path d="M2 4.5 H7" stroke="#2b4a9c" stroke-width="1.2"/></svg>
<svg style="left:76px;top:189px" width="16" height="14" viewBox="0 0 16 14"><path d="M0.5 11 V1.3 Q0.5 0.5 1.3 0.5 H5.2 L6.6 2.2 H12 Q12.8 2.2 12.8 3 V4.6" fill="#f9e9a8" stroke="#c8a44a" stroke-width=".9"/><path d="M0.7 11.6 L3.3 4.4 H15.3 L13 11.6 Z" fill="url(#gFold)" stroke="#94700f" stroke-width=".9"/></svg>
<span class="t" style="left:102.20px;top:188.60px;font-size:15px;line-height:19px;color:#000;font-family:'Liberation Sans',sans-serif;letter-spacing:0.307px;">application</span>
<div style="left:93px;top:222px;width:8px;height:1px;background:repeating-linear-gradient(to right,#a0a0a0 0,#a0a0a0 1px,transparent 1px,transparent 2px);"></div>
<svg style="left:83px;top:218px" width="9" height="9" viewBox="0 0 9 9"><rect x="0.5" y="0.5" width="8" height="8" rx="1" fill="url(#gExp)" stroke="#8f8f8f"/><path d="M2 4.5 H7" stroke="#2b4a9c" stroke-width="1.2"/><path d="M4.5 2 V7" stroke="#2b4a9c" stroke-width="1.2"/></svg>
<svg style="left:101px;top:211px" width="12.4" height="15.3" viewBox="0 0 13 16"><path d="M0.6 0.6 H8.4 L12.2 4.4 V15.2 H0.6 Z" fill="url(#gPage)" stroke="#9db6e2" stroke-width="1"/><path d="M8.4 0.6 L12.2 4.4 V15.2 H0.6" fill="none" stroke="#2e4678" stroke-width="1.2"/><path d="M8.4 0.8 V4.4 H12" fill="#f4f7fd" stroke="#2e4678" stroke-width=".9"/><path d="M2.2 1.8 L8.6 8 L2.2 14.2 Z" fill="url(#pDots)"/></svg>
<span class="t" style="left:126.20px;top:212.60px;font-size:15px;line-height:19px;color:#000;font-family:'Liberation Sans',sans-serif;letter-spacing:0.124px;">proj<span style="font-size:11.2px;position:relative;top:0.8px">_</span>main.c</span>
<div style="left:93px;top:246px;width:8px;height:1px;background:repeating-linear-gradient(to right,#a0a0a0 0,#a0a0a0 1px,transparent 1px,transparent 2px);"></div>
<svg style="left:83px;top:242px" width="9" height="9" viewBox="0 0 9 9"><rect x="0.5" y="0.5" width="8" height="8" rx="1" fill="url(#gExp)" stroke="#8f8f8f"/><path d="M2 4.5 H7" stroke="#2b4a9c" stroke-width="1.2"/><path d="M4.5 2 V7" stroke="#2b4a9c" stroke-width="1.2"/></svg>
<svg style="left:101px;top:235px" width="12.4" height="15.3" viewBox="0 0 13 16"><path d="M0.6 0.6 H8.4 L12.2 4.4 V15.2 H0.6 Z" fill="url(#gPage)" stroke="#9db6e2" stroke-width="1"/><path d="M8.4 0.6 L12.2 4.4 V15.2 H0.6" fill="none" stroke="#2e4678" stroke-width="1.2"/><path d="M8.4 0.8 V4.4 H12" fill="#f4f7fd" stroke="#2e4678" stroke-width=".9"/><path d="M2.2 1.8 L8.6 8 L2.2 14.2 Z" fill="url(#pDots)"/></svg>
<span class="t" style="left:126.20px;top:236.60px;font-size:15px;line-height:19px;color:#000;font-family:'Liberation Sans',sans-serif;letter-spacing:0.030px;">ble<span style="font-size:11.2px;position:relative;top:0.8px">_</span>simple<span style="font-size:11.2px;position:relative;top:0.8px">_</span>peripheral.c</span>
<div style="left:89px;top:270px;width:12px;height:1px;background:repeating-linear-gradient(to right,#a0a0a0 0,#a0a0a0 1px,transparent 1px,transparent 2px);"></div>
<svg style="left:101px;top:259px" width="12.4" height="15.3" viewBox="0 0 13 16"><path d="M0.6 0.6 H8.4 L12.2 4.4 V15.2 H0.6 Z" fill="url(#gPage)" stroke="#9db6e2" stroke-width="1"/><path d="M8.4 0.6 L12.2 4.4 V15.2 H0.6" fill="none" stroke="#2e4678" stroke-width="1.2"/><path d="M8.4 0.8 V4.4 H12" fill="#f4f7fd" stroke="#2e4678" stroke-width=".9"/></svg>
<span class="t" style="left:126.20px;top:260.60px;font-size:15px;line-height:19px;color:#000;font-family:'Liberation Sans',sans-serif;letter-spacing:0.042px;">ble<span style="font-size:11.2px;position:relative;top:0.8px">_</span>simple<span style="font-size:11.2px;position:relative;top:0.8px">_</span>peripheral.h</span>
<div style="left:93px;top:294px;width:8px;height:1px;background:repeating-linear-gradient(to right,#a0a0a0 0,#a0a0a0 1px,transparent 1px,transparent 2px);"></div>
<svg style="left:83px;top:290px" width="9" height="9" viewBox="0 0 9 9"><rect x="0.5" y="0.5" width="8" height="8" rx="1" fill="url(#gExp)" stroke="#8f8f8f"/><path d="M2 4.5 H7" stroke="#2b4a9c" stroke-width="1.2"/><path d="M4.5 2 V7" stroke="#2b4a9c" stroke-width="1.2"/></svg>
<svg style="left:101px;top:283px" width="12.4" height="15.3" viewBox="0 0 13 16"><path d="M0.6 0.6 H8.4 L12.2 4.4 V15.2 H0.6 Z" fill="url(#gPage)" stroke="#9db6e2" stroke-width="1"/><path d="M8.4 0.6 L12.2 4.4 V15.2 H0.6" fill="none" stroke="#2e4678" stroke-width="1.2"/><path d="M8.4 0.8 V4.4 H12" fill="#f4f7fd" stroke="#2e4678" stroke-width=".9"/><path d="M2.2 1.8 L8.6 8 L2.2 14.2 Z" fill="url(#pDots)"/></svg>
<span class="t" style="left:126.20px;top:284.60px;font-size:15px;line-height:19px;color:#000;font-family:'Liberation Sans',sans-serif;letter-spacing:-0.490px;">user<span style="font-size:11.2px;position:relative;top:0.8px">_</span>task.c</span>
<div style="left:93px;top:318px;width:8px;height:1px;background:repeating-linear-gradient(to right,#a0a0a0 0,#a0a0a0 1px,transparent 1px,transparent 2px);"></div>
<svg style="left:83px;top:314px" width="9" height="9" viewBox="0 0 9 9"><rect x="0.5" y="0.5" width="8" height="8" rx="1" fill="url(#gExp)" stroke="#8f8f8f"/><path d="M2 4.5 H7" stroke="#2b4a9c" stroke-width="1.2"/><path d="M4.5 2 V7" stroke="#2b4a9c" stroke-width="1.2"/></svg>
<svg style="left:101px;top:307px" width="12.4" height="15.3" viewBox="0 0 13 16"><path d="M0.6 0.6 H8.4 L12.2 4.4 V15.2 H0.6 Z" fill="url(#gPage)" stroke="#9db6e2" stroke-width="1"/><path d="M8.4 0.6 L12.2 4.4 V15.2 H0.6" fill="none" stroke="#2e4678" stroke-width="1.2"/><path d="M8.4 0.8 V4.4 H12" fill="#f4f7fd" stroke="#2e4678" stroke-width=".9"/><path d="M2.2 1.8 L8.6 8 L2.2 14.2 Z" fill="url(#pDots)"/></svg>
<span class="t" style="left:126.20px;top:308.60px;font-size:15px;line-height:19px;color:#000;font-family:'Liberation Sans',sans-serif;letter-spacing:0.116px;">button.c</span>
<div style="left:69px;top:342px;width:8px;height:1px;background:repeating-linear-gradient(to right,#a0a0a0 0,#a0a0a0 1px,transparent 1px,transparent 2px);"></div>
<svg style="left:59px;top:338px" width="9" height="9" viewBox="0 0 9 9"><rect x="0.5" y="0.5" width="8" height="8" rx="1" fill="url(#gExp)" stroke="#8f8f8f"/><path d="M2 4.5 H7" stroke="#2b4a9c" stroke-width="1.2"/></svg>
<svg style="left:76px;top:333px" width="16" height="14" viewBox="0 0 16 14"><path d="M0.5 11 V1.3 Q0.5 0.5 1.3 0.5 H5.2 L6.6 2.2 H12 Q12.8 2.2 12.8 3 V4.6" fill="#f9e9a8" stroke="#c8a44a" stroke-width=".9"/><path d="M0.7 11.6 L3.3 4.4 H15.3 L13 11.6 Z" fill="url(#gFold)" stroke="#94700f" stroke-width=".9"/></svg>
<span class="t" style="left:102.20px;top:332.60px;font-size:15px;line-height:19px;color:#000;font-family:'Liberation Sans',sans-serif;letter-spacing:0.255px;">profiles</span>
<div style="left:93px;top:366px;width:8px;height:1px;background:repeating-linear-gradient(to right,#a0a0a0 0,#a0a0a0 1px,transparent 1px,transparent 2px);"></div>
<svg style="left:83px;top:362px" width="9" height="9" viewBox="0 0 9 9"><rect x="0.5" y="0.5" width="8" height="8" rx="1" fill="url(#gExp)" stroke="#8f8f8f"/><path d="M2 4.5 H7" stroke="#2b4a9c" stroke-width="1.2"/><path d="M4.5 2 V7" stroke="#2b4a9c" stroke-width="1.2"/></svg>
<svg style="left:101px;top:355px" width="12.4" height="15.3" viewBox="0 0 13 16"><path d="M0.6 0.6 H8.4 L12.2 4.4 V15.2 H0.6 Z" fill="url(#gPage)" stroke="#9db6e2" stroke-width="1"/><path d="M8.4 0.6 L12.2 4.4 V15.2 H0.6" fill="none" stroke="#2e4678" stroke-width="1.2"/><path d="M8.4 0.8 V4.4 H12" fill="#f4f7fd" stroke="#2e4678" stroke-width=".9"/><path d="M2.2 1.8 L8.6 8 L2.2 14.2 Z" fill="url(#pDots)"/></svg>
<span class="t" style="left:126.20px;top:356.60px;font-size:15px;line-height:19px;color:#000;font-family:'Liberation Sans',sans-serif;letter-spacing:-0.096px;">simple<span style="font-size:11.2px;position:relative;top:0.8px">_</span>gatt<span style="font-size:11.2px;position:relative;top:0.8px">_</span>service.c</span>
<div style="left:89px;top:390px;width:12px;height:1px;background:repeating-linear-gradient(to right,#a0a0a0 0,#a0a0a0 1px,transparent 1px,transparent 2px);"></div>
<svg style="left:101px;top:379px" width="12.4" height="15.3" viewBox="0 0 13 16"><path d="M0.6 0.6 H8.4 L12.2 4.4 V15.2 H0.6 Z" fill="url(#gPage)" stroke="#9db6e2" stroke-width="1"/><path d="M8.4 0.6 L12.2 4.4 V15.2 H0.6" fill="none" stroke="#2e4678" stroke-width="1.2"/><path d="M8.4 0.8 V4.4 H12" fill="#f4f7fd" stroke="#2e4678" stroke-width=".9"/></svg>
<span class="t" style="left:126.20px;top:380.60px;font-size:15px;line-height:19px;color:#000;font-family:'Liberation Sans',sans-serif;letter-spacing:-0.117px;">simple<span style="font-size:11.2px;position:relative;top:0.8px">_</span>gatt<span style="font-size:11.2px;position:relative;top:0.8px">_</span>service.h</span>
<div style="left:69px;top:414px;width:8px;height:1px;background:repeating-linear-gradient(to right,#a0a0a0 0,#a0a0a0 1px,transparent 1px,transparent 2px);"></div>
<svg style="left:59px;top:410px" width="9" height="9" viewBox="0 0 9 9"><rect x="0.5" y="0.5" width="8" height="8" rx="1" fill="url(#gExp)" stroke="#8f8f8f"/><path d="M2 4.5 H7" stroke="#2b4a9c" stroke-width="1.2"/><path d="M4.5 2 V7" stroke="#2b4a9c" stroke-width="1.2"/></svg>
<svg style="left:76px;top:405px" width="16" height="14" viewBox="0 0 16 14"><path d="M0.4 2.4 V1 Q0.4 0.4 1 0.4 H5.4 Q6 0.4 6 1 V2.4 Z" fill="#f3d57a" stroke="#c8a44a" stroke-width=".7"/><rect x="0.4" y="2" width="13.6" height="9.7" fill="url(#gFoldC)" stroke="#c09a3a" stroke-width=".7"/><path d="M14 2.4 V11.7 H0.4" fill="none" stroke="#6e5210" stroke-width="1"/></svg>
<span class="t" style="left:102.20px;top:404.60px;font-size:15px;line-height:19px;color:#000;font-family:'Liberation Sans',sans-serif;letter-spacing:0.197px;">driver</span>
<div style="left:69px;top:438px;width:8px;height:1px;background:repeating-linear-gradient(to right,#a0a0a0 0,#a0a0a0 1px,transparent 1px,transparent 2px);"></div>
<svg style="left:59px;top:434px" width="9" height="9" viewBox="0 0 9 9"><rect x="0.5" y="0.5" width="8" height="8" rx="1" fill="url(#gExp)" stroke="#8f8f8f"/><path d="M2 4.5 H7" stroke="#2b4a9c" stroke-width="1.2"/><path d="M4.5 2 V7" stroke="#2b4a9c" stroke-width="1.2"/></svg>
<svg style="left:76px;top:429px" width="16" height="14" viewBox="0 0 16 14"><path d="M0.4 2.4 V1 Q0.4 0.4 1 0.4 H5.4 Q6 0.4 6 1 V2.4 Z" fill="#f3d57a" stroke="#c8a44a" stroke-width=".7"/><rect x="0.4" y="2" width="13.6" height="9.7" fill="url(#gFoldC)" stroke="#c09a3a" stroke-width=".7"/><path d="M14 2.4 V11.7 H0.4" fill="none" stroke="#6e5210" stroke-width="1"/></svg>
<span class="t" style="left:102.20px;top:428.60px;font-size:15px;line-height:19px;color:#000;font-family:'Liberation Sans',sans-serif;letter-spacing:0.464px;">platform</span>
<div style="left:69px;top:462px;width:8px;height:1px;background:repeating-linear-gradient(to right,#a0a0a0 0,#a0a0a0 1px,transparent 1px,transparent 2px);"></div>
<svg style="left:59px;top:458px" width="9" height="9" viewBox="0 0 9 9"><rect x="0.5" y="0.5" width="8" height="8" rx="1" fill="url(#gExp)" stroke="#8f8f8f"/><path d="M2 4.5 H7" stroke="#2b4a9c" stroke-width="1.2"/><path d="M4.5 2 V7" stroke="#2b4a9c" stroke-width="1.2"/></svg>
<svg style="left:76px;top:453px" width="16" height="14" viewBox="0 0 16 14"><path d="M0.4 2.4 V1 Q0.4 0.4 1 0.4 H5.4 Q6 0.4 6 1 V2.4 Z" fill="#f3d57a" stroke="#c8a44a" stroke-width=".7"/><rect x="0.4" y="2" width="13.6" height="9.7" fill="url(#gFoldC)" stroke="#c09a3a" stroke-width=".7"/><path d="M14 2.4 V11.7 H0.4" fill="none" stroke="#6e5210" stroke-width="1"/></svg>
<span class="t" style="left:102.20px;top:452.60px;font-size:15px;line-height:19px;color:#000;font-family:'Liberation Sans',sans-serif;letter-spacing:0.179px;">patch</span>
<div style="left:69px;top:486px;width:8px;height:1px;background:repeating-linear-gradient(to right,#a0a0a0 0,#a0a0a0 1px,transparent 1px,transparent 2px);"></div>
<svg style="left:59px;top:482px" width="9" height="9" viewBox="0 0 9 9"><rect x="0.5" y="0.5" width="8" height="8" rx="1" fill="url(#gExp)" stroke="#8f8f8f"/><path d="M2 4.5 H7" stroke="#2b4a9c" stroke-width="1.2"/><path d="M4.5 2 V7" stroke="#2b4a9c" stroke-width="1.2"/></svg>
<svg style="left:76px;top:477px" width="16" height="14" viewBox="0 0 16 14"><path d="M0.4 2.4 V1 Q0.4 0.4 1 0.4 H5.4 Q6 0.4 6 1 V2.4 Z" fill="#f3d57a" stroke="#c8a44a" stroke-width=".7"/><rect x="0.4" y="2" width="13.6" height="9.7" fill="url(#gFoldC)" stroke="#c09a3a" stroke-width=".7"/><path d="M14 2.4 V11.7 H0.4" fill="none" stroke="#6e5210" stroke-width="1"/></svg>
<span class="t" style="left:102.20px;top:476.60px;font-size:15px;line-height:19px;color:#000;font-family:'Liberation Sans',sans-serif;letter-spacing:0.561px;">lib</span>
<div style="left:65px;top:510px;width:12px;height:1px;background:repeating-linear-gradient(to right,#a0a0a0 0,#a0a0a0 1px,transparent 1px,transparent 2px);"></div>
<svg style="left:75.5px;top:498.4px" width="14.6" height="14.6" viewBox="0 0 14 14"><path d="M7 0.5 L13.5 7 L7 13.5 L0.5 7 Z" fill="#10e010" stroke="#006000" stroke-width="1"/><g fill="#003000"><rect x="6" y="3" width="2" height="2"/><rect x="3" y="6" width="2" height="2"/><rect x="9" y="6" width="2" height="2"/><rect x="6" y="9" width="2" height="2"/><rect x="6" y="6" width="2" height="2" fill="#0a5a0a"/></g></svg>
<span class="t" style="left:102.20px;top:500.60px;font-size:15px;line-height:19px;color:#000;font-family:'Liberation Sans',sans-serif;letter-spacing:-1.123px;">CMSIS</span>
<div style="left:80px;top:379px;width:246.5px;height:4.5px;background:#f85050;border-radius:2.5px;"></div>
<div style="left:2px;top:732.3px;width:324px;height:20px;background:#f0f0f0;"></div>
<div style="left:2px;top:732.3px;width:22px;height:20px;background:#f0f0f0;box-shadow:inset -1px -1px 0 #696969, inset 1px 1px 0 #ffffff, inset -2px -2px 0 #a0a0a0;"></div>
<svg style="left:8px;top:736px" width="7" height="11" viewBox="0 0 7 11"><path d="M6.5 0.3 L0.8 5.5 L6.5 10.7Z" fill="#000"/></svg>
<div style="left:24px;top:732.3px;width:254px;height:20px;background:#f0f0f0;box-shadow:inset -1px -1px 0 #696969, inset 1px 1px 0 #ffffff, inset -2px -2px 0 #a0a0a0;"></div>
<div style="left:278px;top:732.3px;width:25px;height:20px;background:#f6f6f6;"></div>
<div style="left:303px;top:732.3px;width:22px;height:20px;background:#f0f0f0;box-shadow:inset -1px -1px 0 #696969, inset 1px 1px 0 #ffffff, inset -2px -2px 0 #a0a0a0;"></div>
<svg style="left:311px;top:736px" width="7" height="11" viewBox="0 0 7 11"><path d="M0.5 0.3 L6.2 5.5 L0.5 10.7Z" fill="#000"/></svg>
<div style="left:0px;top:752.2px;width:327px;height:31px;background:#f6f6f6;"></div>
<div style="left:0px;top:783.2px;width:327px;height:4.4px;background:#fdfdfd;"></div>
<div style="left:0px;top:752.7px;width:2.5px;height:1.5px;background:#303030;"></div>
<div style="left:2px;top:752.2px;width:81px;height:29.8px;background:#f0f0f0;"></div>
<div style="left:82px;top:753.8px;width:1.2px;height:29.2px;background:#1e1e1e;"></div>
<div style="left:3px;top:782px;width:80px;height:1px;background:#1e1e1e;"></div>
<div style="left:82px;top:753.8px;width:244px;height:1.5px;background:#1e1e1e;"></div>
<svg style="left:7px;top:759px" width="18" height="16" viewBox="0 0 18 16"><rect x="0.5" y="0.5" width="17" height="15" fill="#f4f4e0" stroke="#6a7a9a"/><rect x="1" y="1" width="16" height="3" fill="#5a7fd0"/><rect x="3" y="6" width="3" height="2.2" fill="#c8d020"/><rect x="3" y="9.2" width="3" height="2.2" fill="#c8d020"/><rect x="3" y="12.2" width="3" height="2" fill="#c8d020"/><rect x="7" y="6" width="8" height="2.2" fill="#c8d020"/><rect x="7" y="9.2" width="8" height="2.2" fill="#d8dc50"/><rect x="7" y="12.2" width="8" height="2" fill="#d8dc50"/></svg>
<span class="t" style="left:28.50px;top:760.88px;font-size:13.33px;line-height:17px;color:#000;font-family:'Liberation Sans',sans-serif;letter-spacing:0.074px;">Project</span>
<svg style="left:86px;top:757px" width="22" height="20" viewBox="0 0 22 20"><path d="M1 9 L9 1 L20 5 L13 15 L5 17 Z" fill="url(#gBook)" stroke="#4a28a8" stroke-width=".8"/><path d="M2 11 L6 16 L13 14" fill="none" stroke="#e8e0ff" stroke-width="1.5"/><circle cx="14.5" cy="13.5" r="5.2" fill="#7f9ee8" stroke="#3a58b8" stroke-width=".8"/><text x="12" y="17.3" font-family="Liberation Sans,sans-serif" font-weight="bold" font-size="10" fill="#fff">?</text></svg>
<span class="t" style="left:109.50px;top:760.88px;font-size:13.33px;line-height:17px;color:#7a7a7a;font-family:'Liberation Sans',sans-serif;letter-spacing:-0.209px;">Books</span>
<div style="left:156px;top:758.6px;width:1px;height:20px;background:#a0a0a0;"></div>
<span class="t" style="left:164.20px;top:756.98px;font-size:14.5px;line-height:18px;color:#111;font-family:'Liberation Sans',sans-serif;font-weight:bold;">{</span>
<span class="t" style="left:173.20px;top:756.98px;font-size:14.5px;line-height:18px;color:#111;font-family:'Liberation Sans',sans-serif;font-weight:bold;">}</span>
<span class="t" style="left:183.00px;top:760.88px;font-size:13.33px;line-height:17px;color:#7a7a7a;font-family:'Liberation Sans',sans-serif;letter-spacing:-0.183px;">Functio...</span>
<div style="left:238px;top:758.6px;width:1px;height:20px;background:#a0a0a0;"></div>
<span class="t" style="left:243.60px;top:756.98px;font-size:14.5px;line-height:18px;color:#111;font-family:'Liberation Sans',sans-serif;font-weight:bold;">(</span>
<span class="t" style="left:248.60px;top:756.98px;font-size:14.5px;line-height:18px;color:#111;font-family:'Liberation Sans',sans-serif;font-weight:bold;">)</span>
<svg style="left:254px;top:769.8px" width="9.5" height="7.5" viewBox="0 0 10 8"><path d="M0 2.5 H5 V0 L10 4 L5 8 V5.5 H0 Z" fill="#2a5ad8"/></svg>
<span class="t" style="left:265.00px;top:760.88px;font-size:13.33px;line-height:17px;color:#7a7a7a;font-family:'Liberation Sans',sans-serif;letter-spacing:-0.342px;">Templa...</span>
<div style="left:320px;top:758.6px;width:1px;height:20px;background:#a0a0a0;"></div>
<div style="left:0px;top:787.6px;width:635px;height:3px;background:#c3d2e6;"></div>
<div style="left:332px;top:107.1px;width:156.5px;height:30px;background:#f7f7f7;"></div>
<div style="left:488.5px;top:108.3px;width:147px;height:29px;background:#f7f7f7;"></div>
<div style="left:331px;top:107px;width:1px;height:30px;background:#b2b2b2;"></div>
<svg style="left:332px;top:107px" width="303" height="30" viewBox="0 0 303 30"><path d="M3.5 29.5 L30.3 3 L144 3 Q148 3 148 7 L148 29.5 Z" fill="#c4d3f1" stroke="#9aa3b5" stroke-width="1"/><path d="M149.5 29.5 L149.5 10 L154.5 3.5 L310 3.5 L310 29.5 Z" fill="#fcda80" stroke="#c9b98a" stroke-width="1"/><path d="M149 10 L154 3.3" stroke="#b0b0b0" stroke-width="1" fill="none"/></svg>
<svg preserveAspectRatio="none" style="left:366.2px;top:113px" width="14.6" height="19" viewBox="0 0 13 16"><path d="M0.6 0.6 H8.4 L12.2 4.4 V15.2 H0.6 Z" fill="url(#gPage)" stroke="#9db6e2" stroke-width="1"/><path d="M8.4 0.6 L12.2 4.4 V15.2 H0.6" fill="none" stroke="#2e4678" stroke-width="1.2"/><path d="M8.4 0.8 V4.4 H12" fill="#f4f7fd" stroke="#2e4678" stroke-width=".9"/><path d="M2.2 1.8 L8.6 8 L2.2 14.2 Z" fill="url(#pDots)"/></svg>
<svg preserveAspectRatio="none" style="left:490.2px;top:113px" width="14.6" height="19" viewBox="0 0 13 16"><path d="M0.6 0.6 H8.4 L12.2 4.4 V15.2 H0.6 Z" fill="url(#gPage)" stroke="#9db6e2" stroke-width="1"/><path d="M8.4 0.6 L12.2 4.4 V15.2 H0.6" fill="none" stroke="#2e4678" stroke-width="1.2"/><path d="M8.4 0.8 V4.4 H12" fill="#f4f7fd" stroke="#2e4678" stroke-width=".9"/><path d="M2.2 1.8 L8.6 8 L2.2 14.2 Z" fill="url(#pDots)"/></svg>
<span class="t" style="left:396.00px;top:115.08px;font-size:13.33px;line-height:17px;color:#000;font-family:'Liberation Sans',sans-serif;letter-spacing:0.179px;">proj<span style="font-size:9.95px;position:relative;top:0.8px">_</span>main.c</span>
<span class="t" style="left:525.00px;top:115.08px;font-size:13.33px;line-height:17px;color:#000;font-family:'Liberation Sans',sans-serif;letter-spacing:-0.03px;">ble<span style="font-size:9.95px;position:relative;top:0.8px">_</span>simple<span style="font-size:9.95px;position:relative;top:0.8px">_</span>peripheral.c</span>
<div style="left:331px;top:136px;width:304px;height:1px;background:#b4b0b0;"></div>
<div style="left:331px;top:137px;width:304px;height:2.2px;background:#f4a1a1;"></div>
<div style="left:331px;top:136px;width:1px;height:648px;background:#ababab;"></div>
<div style="left:332px;top:137px;width:2.3px;height:647px;background:#f4a1a1;"></div>
<div style="left:332px;top:780.7px;width:303px;height:2.6px;background:#f4a1a1;"></div>
<div style="left:331px;top:783.3px;width:304px;height:0.8px;background:#d8d0d0;"></div>
<div style="left:334.3px;top:139.1px;width:301px;height:1.1px;background:#6a6a6a;"></div>
<div style="left:334.3px;top:139.1px;width:1.7px;height:641.5px;background:#6c6c6c;"></div>
<div style="left:336px;top:140.5px;width:73px;height:617px;background:#e9e9e9;"></div>
<div style="left:409px;top:140.5px;width:14px;height:617px;background:#f7f7f7;background-image:repeating-conic-gradient(#e9e9e9 0 25%,#ffffff 0 50%);background-size:2px 2px;"></div>
<div style="left:416px;top:140.5px;width:1px;height:617px;background:#808080;"></div>
<span class="t" style="left:376.20px;top:140.05px;font-size:16.67px;line-height:21px;color:#0c0c18;font-family:'Liberation Mono',monospace;-webkit-text-stroke:0.2px #e9e9e9;">136</span>
<span class="t" style="left:376.20px;top:160.05px;font-size:16.67px;line-height:21px;color:#0c0c18;font-family:'Liberation Mono',monospace;-webkit-text-stroke:0.2px #e9e9e9;">137</span>
<span class="t" style="left:376.20px;top:180.05px;font-size:16.67px;line-height:21px;color:#0c0c18;font-family:'Liberation Mono',monospace;-webkit-text-stroke:0.2px #e9e9e9;">138</span>
<span class="t" style="left:376.20px;top:200.05px;font-size:16.67px;line-height:21px;color:#0c0c18;font-family:'Liberation Mono',monospace;-webkit-text-stroke:0.2px #e9e9e9;">139</span>
<span class="t" style="left:376.20px;top:220.05px;font-size:16.67px;line-height:21px;color:#0c0c18;font-family:'Liberation Mono',monospace;-webkit-text-stroke:0.2px #e9e9e9;">140</span>
<span class="t" style="left:376.20px;top:240.05px;font-size:16.67px;line-height:21px;color:#0c0c18;font-family:'Liberation Mono',monospace;-webkit-text-stroke:0.2px #e9e9e9;">141</span>
<span class="t" style="left:376.20px;top:260.05px;font-size:16.67px;line-height:21px;color:#0c0c18;font-family:'Liberation Mono',monospace;-webkit-text-stroke:0.2px #e9e9e9;">142</span>
<span class="t" style="left:376.20px;top:280.05px;font-size:16.67px;line-height:21px;color:#0c0c18;font-family:'Liberation Mono',monospace;-webkit-text-stroke:0.2px #e9e9e9;">143</span>
<span class="t" style="left:376.20px;top:300.05px;font-size:16.67px;line-height:21px;color:#0c0c18;font-family:'Liberation Mono',monospace;-webkit-text-stroke:0.2px #e9e9e9;">144</span>
<span class="t" style="left:376.20px;top:320.05px;font-size:16.67px;line-height:21px;color:#0c0c18;font-family:'Liberation Mono',monospace;-webkit-text-stroke:0.2px #e9e9e9;">145</span>
<span class="t" style="left:376.20px;top:340.05px;font-size:16.67px;line-height:21px;color:#0c0c18;font-family:'Liberation Mono',monospace;-webkit-text-stroke:0.2px #e9e9e9;">146</span>
<span class="t" style="left:376.20px;top:360.05px;font-size:16.67px;line-height:21px;color:#0c0c18;font-family:'Liberation Mono',monospace;-webkit-text-stroke:0.2px #e9e9e9;">147</span>
<span class="t" style="left:376.20px;top:380.05px;font-size:16.67px;line-height:21px;color:#0c0c18;font-family:'Liberation Mono',monospace;-webkit-text-stroke:0.2px #e9e9e9;">148</span>
<span class="t" style="left:376.20px;top:400.05px;font-size:16.67px;line-height:21px;color:#0c0c18;font-family:'Liberation Mono',monospace;-webkit-text-stroke:0.2px #e9e9e9;">149</span>
<span class="t" style="left:376.20px;top:420.05px;font-size:16.67px;line-height:21px;color:#0c0c18;font-family:'Liberation Mono',monospace;-webkit-text-stroke:0.2px #e9e9e9;">150</span>
<span class="t" style="left:376.20px;top:440.05px;font-size:16.67px;line-height:21px;color:#0c0c18;font-family:'Liberation Mono',monospace;-webkit-text-stroke:0.2px #e9e9e9;">151</span>
<span class="t" style="left:376.20px;top:460.05px;font-size:16.67px;line-height:21px;color:#0c0c18;font-family:'Liberation Mono',monospace;-webkit-text-stroke:0.2px #e9e9e9;">152</span>
<span class="t" style="left:376.20px;top:480.05px;font-size:16.67px;line-height:21px;color:#0c0c18;font-family:'Liberation Mono',monospace;-webkit-text-stroke:0.2px #e9e9e9;">153</span>
<span class="t" style="left:376.20px;top:500.05px;font-size:16.67px;line-height:21px;color:#0c0c18;font-family:'Liberation Mono',monospace;-webkit-text-stroke:0.2px #e9e9e9;">154</span>
<span class="t" style="left:376.20px;top:520.05px;font-size:16.67px;line-height:21px;color:#0c0c18;font-family:'Liberation Mono',monospace;-webkit-text-stroke:0.2px #e9e9e9;">155</span>
<span class="t" style="left:376.20px;top:540.05px;font-size:16.67px;line-height:21px;color:#0c0c18;font-family:'Liberation Mono',monospace;-webkit-text-stroke:0.2px #e9e9e9;">156</span>
<span class="t" style="left:376.20px;top:560.05px;font-size:16.67px;line-height:21px;color:#0c0c18;font-family:'Liberation Mono',monospace;-webkit-text-stroke:0.2px #e9e9e9;">157</span>
<span class="t" style="left:376.20px;top:580.05px;font-size:16.67px;line-height:21px;color:#0c0c18;font-family:'Liberation Mono',monospace;-webkit-text-stroke:0.2px #e9e9e9;">158</span>
<span class="t" style="left:376.20px;top:600.05px;font-size:16.67px;line-height:21px;color:#0c0c18;font-family:'Liberation Mono',monospace;-webkit-text-stroke:0.2px #e9e9e9;">159</span>
<span class="t" style="left:376.20px;top:620.05px;font-size:16.67px;line-height:21px;color:#0c0c18;font-family:'Liberation Mono',monospace;-webkit-text-stroke:0.2px #e9e9e9;">160</span>
<span class="t" style="left:376.20px;top:640.05px;font-size:16.67px;line-height:21px;color:#0c0c18;font-family:'Liberation Mono',monospace;-webkit-text-stroke:0.2px #e9e9e9;">161</span>
<span class="t" style="left:376.20px;top:660.05px;font-size:16.67px;line-height:21px;color:#0c0c18;font-family:'Liberation Mono',monospace;-webkit-text-stroke:0.2px #e9e9e9;">162</span>
<span class="t" style="left:376.20px;top:680.05px;font-size:16.67px;line-height:21px;color:#0c0c18;font-family:'Liberation Mono',monospace;-webkit-text-stroke:0.2px #e9e9e9;">163</span>
<span class="t" style="left:376.20px;top:700.05px;font-size:16.67px;line-height:21px;color:#0c0c18;font-family:'Liberation Mono',monospace;-webkit-text-stroke:0.2px #e9e9e9;">164</span>
<span class="t" style="left:376.20px;top:720.05px;font-size:16.67px;line-height:21px;color:#0c0c18;font-family:'Liberation Mono',monospace;-webkit-text-stroke:0.2px #e9e9e9;">165</span>
<span class="t" style="left:376.20px;top:740.05px;font-size:16.67px;line-height:21px;color:#0c0c18;font-family:'Liberation Mono',monospace;-webkit-text-stroke:0.2px #e9e9e9;">166</span>
<div style="left:417px;top:190px;width:5px;height:1px;background:#808080;"></div>
<span class="t" style="left:503.40px;top:200.05px;font-size:16.67px;line-height:21px;color:#008000;font-family:'Liberation Mono',monospace;-webkit-text-stroke:0.2px #fff;">// Characteri</span>
<span class="t" style="left:503.40px;top:220.05px;font-size:16.67px;line-height:21px;color:#000;font-family:'Liberation Mono',monospace;-webkit-text-stroke:0.2px #fff;">[SP_IDX_CHAR1_</span>
<div style="left:411px;top:225px;width:11px;height:11px;background:#f8f8f8;border:1px solid #808080;box-sizing:border-box;"></div>
<div style="left:413px;top:230px;width:7px;height:1px;background:#707070;"></div>
<div style="left:417px;top:350px;width:5px;height:1px;background:#808080;"></div>
<span class="t" style="left:503.40px;top:360.05px;font-size:16.67px;line-height:21px;color:#008000;font-family:'Liberation Mono',monospace;-webkit-text-stroke:0.2px #fff;">// Characteri</span>
<span class="t" style="left:503.40px;top:380.05px;font-size:16.67px;line-height:21px;color:#000;font-family:'Liberation Mono',monospace;-webkit-text-stroke:0.2px #fff;">[SP_IDX_CHAR1_</span>
<div style="left:411px;top:385px;width:11px;height:11px;background:#f8f8f8;border:1px solid #808080;box-sizing:border-box;"></div>
<div style="left:413px;top:390px;width:7px;height:1px;background:#707070;"></div>
<div style="left:417px;top:530px;width:5px;height:1px;background:#808080;"></div>
<span class="t" style="left:503.40px;top:540.05px;font-size:16.67px;line-height:21px;color:#008000;font-family:'Liberation Mono',monospace;-webkit-text-stroke:0.2px #fff;">// Characteri</span>
<span class="t" style="left:503.40px;top:560.05px;font-size:16.67px;line-height:21px;color:#000;font-family:'Liberation Mono',monospace;-webkit-text-stroke:0.2px #fff;">[SP_IDX_CHAR2_</span>
<div style="left:411px;top:565px;width:11px;height:11px;background:#f8f8f8;border:1px solid #808080;box-sizing:border-box;"></div>
<div style="left:413px;top:570px;width:7px;height:1px;background:#707070;"></div>
<div style="left:417px;top:670px;width:5px;height:1px;background:#808080;"></div>
<span class="t" style="left:503.40px;top:680.05px;font-size:16.67px;line-height:21px;color:#008000;font-family:'Liberation Mono',monospace;-webkit-text-stroke:0.2px #fff;">// Characteri</span>
<span class="t" style="left:503.40px;top:700.05px;font-size:16.67px;line-height:21px;color:#000;font-family:'Liberation Mono',monospace;-webkit-text-stroke:0.2px #fff;">[SP_IDX_CHAR2_</span>
<div style="left:411px;top:705px;width:11px;height:11px;background:#f8f8f8;border:1px solid #808080;box-sizing:border-box;"></div>
<div style="left:413px;top:710px;width:7px;height:1px;background:#707070;"></div>
<div style="left:336px;top:757.5px;width:299px;height:23.2px;background:#f0f0f0;"></div>
<div style="left:357px;top:759px;width:278px;height:18.8px;background:#cdcdcd;"></div>
<svg style="left:341px;top:762px" width="9" height="13" viewBox="0 0 9 13"><path d="M7.5 1 L2 6.3 L7.5 11.6" fill="none" stroke="#505050" stroke-width="1.8"/></svg>
<div style="left:331.5px;top:783.5px;width:304px;height:3.5px;background:#fbfbfb;"></div>
<div style="left:0px;top:787.6px;width:635px;height:3px;background:#c3d2e6;"></div>
</div></body></html>
